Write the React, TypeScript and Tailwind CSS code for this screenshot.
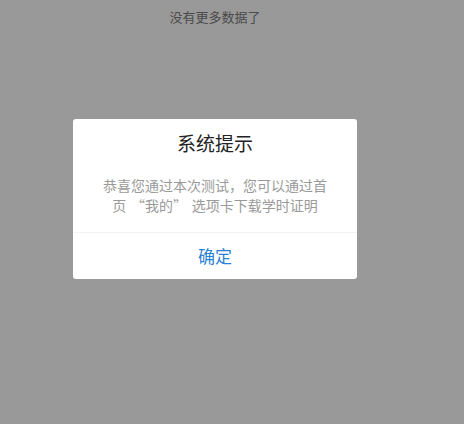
import React from 'react';

const App: React.FC = () => {
    return (
        <div
            lang="zh-CN"
            className="w-[464px] h-[424px] bg-[#999999] overflow-hidden"
            style={{ fontFamily: '"Noto Sans CJK SC", "Noto Sans", sans-serif' }}
        >
            <div className="w-[430px] flex flex-col items-center">
                {/* 列表底部提示 */}
                <div className="pt-[8px] h-[26px] leading-[18px] text-[13px] text-[#4a4a4a]">没有更多数据了</div>

                {/* 弹窗 */}
                <div className="mt-[93px] w-[284px] bg-white rounded-[3px] flex flex-col">
                    <div className="pt-[12px] h-[36px] leading-[24px] text-[19px] text-[#222222] text-center">系统提示</div>
                    <p className="mt-[20px] px-[26px] text-[14px] leading-[20px] text-[#9a9a9a] text-center">
                        {'恭喜您通过本次测试，您可以通过首页\u2004“我的”\u2004选项卡下载学时证明'}
                    </p>
                    <div className="mt-[17px] h-px bg-[#f2f2f2]" />
                    <button className="h-[46px] text-[17px] text-[#2a82d4] text-center">确定</button>
                </div>
            </div>
        </div>
    );
};

export default App;
